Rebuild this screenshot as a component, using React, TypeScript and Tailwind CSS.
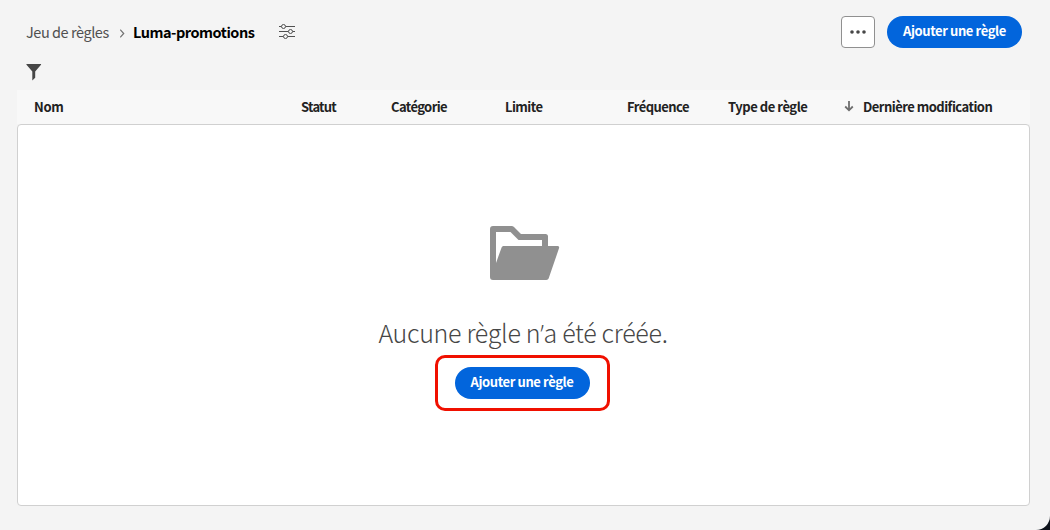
import React from "react";

const columns = [
  { label: "Nom", cell: "pl-[17px]", text: "tracking-[-0.35px]" },
  { label: "Statut", cell: "", text: "tracking-[-0.75px]" },
  { label: "Catégorie", cell: "", text: "tracking-[-0.6px]" },
  { label: "Limite", cell: "", text: "tracking-[-0.55px]" },
  { label: "Fréquence", cell: "", text: "tracking-[-0.55px]" },
  { label: "Type de règle", cell: "", text: "tracking-[-0.45px]" },
];

function SlidersIcon() {
  return (
    <svg width="16" height="16" viewBox="0 0 16 16" fill="none" stroke="#505050" strokeWidth="1" className="-mt-px">
      <path d="M0 2.5h2.3M6.7 2.5H16M0 7.5h9.3M13.7 7.5H16M0 12.5h4.3M8.7 12.5H16" />
      <circle cx="4.5" cy="2.5" r="2" />
      <circle cx="11.5" cy="7.5" r="2" />
      <circle cx="6.5" cy="12.5" r="2" />
    </svg>
  );
}

function FunnelIcon() {
  return (
    <svg width="16" height="17" viewBox="0 0 16 17" fill="#464646">
      <path d="M.8 0h13.9c.4 0 .6.5.3.8L9.200 7.500v6.300L6.300 16.400V7.500L.5.800C.2.500.4 0 .8 0z" />
    </svg>
  );
}

function FolderIcon() {
  return (
    <svg width="70" height="54" viewBox="0 0 70 54" fill="#909090" className="ml-1.5 shrink-0">
      <path
        fillRule="evenodd"
        d="M3 0h18.500c1 0 1.800.3 2.500 1l7 7h24.500A2.500 2.500 0 0 1 58 10.500V20h9.500c1.300 0 2 1 1.500 2.300L58.700 52.300c-.4 1.100-1.200 1.700-2.400 1.700H3a3 3 0 0 1-3-3V3a3 3 0 0 1 3-3zM6 6v31l5.500-15.300c.4-1.100 1.200-1.700 2.400-1.700H52v-6H28.500L20.500 6z"
      />
    </svg>
  );
}

function AddButton() {
  return (
    <button className="flex h-8 w-[135px] shrink-0 items-center justify-center rounded-full bg-[#0265dc] pb-0.5 text-[13px] leading-4 font-bold tracking-[-0.4px] whitespace-nowrap text-white">
      Ajouter une règle
    </button>
  );
}

export default function App() {
  return (
    <div className="h-[530px] w-[1050px] overflow-hidden bg-[#0d131b] font-['Noto_Sans_CJK_SC','Noto_Sans',sans-serif]">
      <main className="flex h-full flex-col rounded-br-[14px] bg-[#f4f4f4] pr-5 pb-6 pl-[17px]">
        <header className="flex h-[50px] shrink-0 items-start pt-4 pr-2 pl-[9px]">
          <nav className="flex h-8 items-center text-[14.5px] leading-5 whitespace-nowrap">
            <a className="w-[94px] tracking-[-0.45px] text-[#505050]">Jeu de règles</a>
            <svg width="5" height="9" viewBox="0 0 5 9" fill="none" stroke="#707070" strokeWidth="1.200" className="mt-0.5">
              <path d="M.2.700 3.700 4.500.2 8.300" />
            </svg>
            <h1 className="ml-2 w-[146px] font-bold tracking-[-0.48px] text-black">Luma-promotions</h1>
            <SlidersIcon />
          </nav>
          <div className="ml-auto flex gap-3">
            <button className="flex h-8 w-[34px] items-center justify-center rounded border border-[#909090] bg-white">
              <svg width="16" height="4" viewBox="0 0 16 4" fill="#464646">
                <circle cx="2" cy="2" r="1.800" />
                <circle cx="8" cy="2" r="1.800" />
                <circle cx="14" cy="2" r="1.800" />
              </svg>
            </button>
            <AddButton />
          </div>
        </header>
        <div className="h-10 shrink-0 pt-[14px] pl-[9px]">
          <FunnelIcon />
        </div>
        <div className="grid h-[34px] shrink-0 grid-cols-[284px_90px_114px_122px_101px_116px_1fr] items-center bg-[#f8f8f8] text-[13px] leading-5 font-bold whitespace-nowrap text-[#222222]">
          {columns.map((c) => (
            <div key={c.label} className={c.cell}>
              <span className={c.text}>{c.label}</span>
            </div>
          ))}
          <div className="flex items-center">
            <svg width="10" height="11" viewBox="0 0 10 11" fill="none" stroke="#6e6e6e" strokeWidth="1.800" className="-mt-0.5">
              <path d="M5 0v9M1.200 5.500 5 9.300l3.800-3.800" />
            </svg>
            <span className="ml-[9px] tracking-[-0.52px]">Dernière modification</span>
          </div>
        </div>
        <section className="flex min-h-0 flex-1 flex-col items-center rounded border border-[#d0d0d0] bg-white pt-[101px] pr-[3px]">
          <FolderIcon />
          <p className="mt-[33px] ml-0.5 text-[25px] leading-[38px] font-light tracking-[-0.3px] whitespace-nowrap text-[#464646]">
            Aucune règle n<span className="font-['Open_Sans']">’</span>a été créée.
          </p>
          <div className="mt-[3px] flex h-14 w-[175px] items-center justify-center rounded-[10px] border-3 border-[#f01000]">
            <AddButton />
          </div>
        </section>
      </main>
    </div>
  );
}
